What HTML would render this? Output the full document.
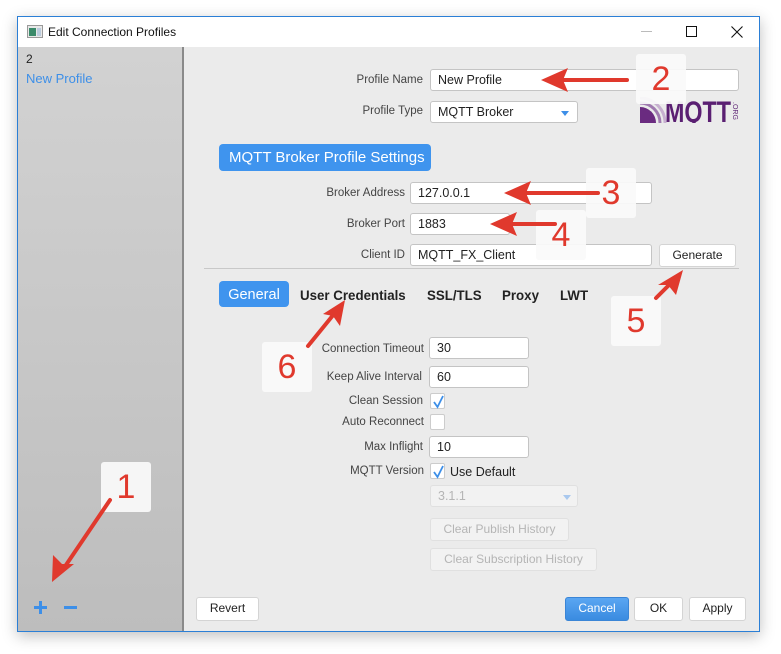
<!DOCTYPE html>
<html><head><meta charset="utf-8"><style>
*{box-sizing:border-box;margin:0;padding:0}
body{width:781px;height:654px;background:#fff;position:relative;overflow:hidden;font-family:"Liberation Sans",sans-serif;}
.win{position:absolute;left:17px;top:16px;width:743px;height:616px;border:1px solid #2b7fd6;background:#ebebeb;box-shadow:0 4px 14px rgba(0,0,0,.25)}
.title{position:absolute;left:0;top:0;width:741px;height:30px;background:#fff}
.side{position:absolute;left:0;top:30px;width:166px;height:584px;background:linear-gradient(#d2d2d2,#bdbdbd);border-right:2px solid #8a8a8a}
.a{position:absolute;}
.lbl{position:absolute;font-size:11.5px;color:#444;text-align:right;white-space:nowrap}
.inp{position:absolute;background:#fff;border:1px solid #c4c4c4;border-radius:3px;font-size:12.5px;color:#222;padding-left:7px;line-height:20px}
.btn{position:absolute;background:#fff;border:1px solid #d4d4d4;border-radius:3px;font-size:12px;color:#222;text-align:center;line-height:21px}
.dis{background:#f2f2f2;color:#b5b5b5;border-color:#e0e0e0}
.tab{position:absolute;top:281px;font-size:14px;color:#222;font-weight:bold;line-height:28px;transform-origin:left center;transform:scaleX(.95);white-space:nowrap}
.cb{position:absolute;width:15px;height:16px;background:#fff;border:1px solid #ccc;border-radius:2px}
.cb svg{position:absolute;left:1px;top:1px}
.box{position:absolute;width:50px;height:50px;background:rgba(250,250,250,.93);border-radius:3px;font-size:34px;color:#e0392d;text-align:center;line-height:50px}
</style></head><body>
<div class="win">
 <div class="title">
  <svg class="a" style="left:9px;top:8px" width="16" height="13"><rect x="0.5" y="0.5" width="15" height="12" fill="#e8e8e8" stroke="#999"/><rect x="2" y="3" width="7" height="8" fill="#3a8a6a"/><rect x="10" y="3" width="4" height="8" fill="#bcd"/></svg>
  <div class="a" style="left:30px;top:8px;font-size:12px;color:#111">Edit Connection Profiles</div>
  <div class="a" style="left:623px;top:14px;width:11px;height:1px;background:#bbb"></div>
  <div class="a" style="left:668px;top:9px;width:11px;height:11px;border:1px solid #111"></div>
  <svg class="a" style="left:713px;top:9px" width="12" height="12"><path d="M0.5 0.5L11.5 11.5M11.5 0.5L0.5 11.5" stroke="#111" stroke-width="1.1"/></svg>
 </div>
 <div class="side">
  <div class="a" style="left:8px;top:5px;font-size:12px;color:#222">2</div>
  <div class="a" style="left:8px;top:24px;font-size:13px;color:#3d8fe8">New Profile</div>
  <div class="a" style="left:16px;top:559px;width:13px;height:3px;background:#3d8fe8"></div>
  <div class="a" style="left:21px;top:554px;width:3px;height:13px;background:#3d8fe8"></div>
  <div class="a" style="left:46px;top:559px;width:13px;height:3px;background:#3d8fe8"></div>
 </div>
</div>
<div class="lbl" style="right:358px;top:74px">Profile Name</div>
<div class="inp" style="left:430px;top:69px;width:309px;height:22px">New Profile</div>
<div class="lbl" style="right:358px;top:105px">Profile Type</div>
<div class="inp" style="left:430px;top:101px;width:148px;height:22px">MQTT Broker<span style="position:absolute;right:8px;top:9px;border:4px solid transparent;border-top:5px solid #3d8fe8;border-bottom:0"></span></div>
<svg class="a" style="left:640px;top:97px" width="100" height="26"><path d="M0 26 V10 A16 16 0 0 1 16 26Z" fill="#6a2b80"/><path d="M0 6 A20 20 0 0 1 20 26" stroke="#a07ab0" stroke-width="3" fill="none"/><path d="M0 1 A25 25 0 0 1 25 26" stroke="#c7b0d0" stroke-width="3" fill="none"/><text x="25" y="25" font-family="Liberation Sans" font-weight="bold" font-size="30" fill="#5a1f72" textLength="66" lengthAdjust="spacingAndGlyphs">MQTT</text><text x="93" y="5" font-size="7" fill="#5a1f72" transform="rotate(90 93 5)">.ORG</text></svg>
<div class="a" style="left:219px;top:144px;width:212px;height:27px;background:#3f94ee;border-radius:4px;color:#fff;font-size:15px;line-height:27px;padding-left:10px">MQTT Broker Profile Settings</div>
<div class="lbl" style="right:376px;top:187px">Broker Address</div>
<div class="inp" style="left:410px;top:182px;width:242px;height:22px">127.0.0.1</div>
<div class="lbl" style="right:376px;top:218px">Broker Port</div>
<div class="inp" style="left:410px;top:213px;width:100px;height:22px">1883</div>
<div class="lbl" style="right:376px;top:249px">Client ID</div>
<div class="inp" style="left:410px;top:244px;width:242px;height:22px">MQTT_FX_Client</div>
<div class="btn" style="left:659px;top:244px;width:77px;height:23px">Generate</div>
<div class="a" style="left:204px;top:268px;width:535px;height:1px;background:#c8c8c8"></div>
<div class="a" style="left:219px;top:281px;width:70px;height:26px;background:#3f94ee;border-radius:4px;color:#fff;font-size:14.5px;line-height:28px;text-align:center">General</div>
<div class="tab" style="left:300px">User Credentials</div>
<div class="tab" style="left:427px">SSL/TLS</div>
<div class="tab" style="left:502px">Proxy</div>
<div class="tab" style="left:560px">LWT</div>
<div class="lbl" style="right:357px;top:343px">Connection Timeout</div>
<div class="inp" style="left:429px;top:337px;width:100px;height:22px">30</div>
<div class="lbl" style="right:359px;top:371px">Keep Alive Interval</div>
<div class="inp" style="left:429px;top:366px;width:100px;height:22px">60</div>
<div class="lbl" style="right:358px;top:395px">Clean Session</div>
<div class="cb" style="left:430px;top:393px"><svg width="13" height="14"><path d="M2 7L5.5 12L11 1" stroke="#3d8fe8" stroke-width="1.8" fill="none"/></svg></div>
<div class="lbl" style="right:357px;top:416px">Auto Reconnect</div>
<div class="cb" style="left:430px;top:414px"></div>
<div class="lbl" style="right:358px;top:441px">Max Inflight</div>
<div class="inp" style="left:429px;top:436px;width:100px;height:22px">10</div>
<div class="lbl" style="right:357px;top:465px">MQTT Version</div>
<div class="cb" style="left:430px;top:463px"><svg width="13" height="14"><path d="M2 7L5.5 12L11 1" stroke="#3d8fe8" stroke-width="1.8" fill="none"/></svg></div>
<div class="a" style="left:450px;top:465px;font-size:12.5px;color:#222">Use Default</div>
<div class="inp dis" style="left:430px;top:485px;width:148px;height:22px">3.1.1<span style="position:absolute;right:6px;top:9px;border:4px solid transparent;border-top:5px solid #a9c8ee;border-bottom:0"></span></div>
<div class="btn dis" style="left:430px;top:518px;width:139px;height:23px">Clear Publish History</div>
<div class="btn dis" style="left:430px;top:548px;width:167px;height:23px">Clear Subscription History</div>
<div class="btn" style="left:196px;top:597px;width:63px;height:24px">Revert</div>
<div class="btn" style="left:565px;top:597px;width:64px;height:24px;background:linear-gradient(#5aa6f2,#3a8be0);border-color:#3a85d6;color:#fff">Cancel</div>
<div class="btn" style="left:634px;top:597px;width:49px;height:24px">OK</div>
<div class="btn" style="left:689px;top:597px;width:57px;height:24px">Apply</div>
<div class="box" style="left:636px;top:54px">2</div>
<div class="box" style="left:586px;top:168px">3</div>
<div class="box" style="left:536px;top:210px">4</div>
<div class="box" style="left:611px;top:296px">5</div>
<div class="box" style="left:262px;top:342px">6</div>
<div class="box" style="left:101px;top:462px">1</div>
<svg class="a" style="left:0;top:0" width="781" height="654">
<g stroke="#e0392d" stroke-width="4" stroke-linecap="round" fill="none">
<path d="M627 80H560"/><path d="M598 193H522"/><path d="M555 224H505"/><path d="M656 298L672 282"/><path d="M308 346L334 314"/><path d="M110 500L66 565"/>
</g>
<g fill="#e0392d">
<path d="M541 80L568 68L563 80L568 92Z"/>
<path d="M504 193L531 181L526 193L531 205Z"/>
<path d="M490 224L517 212L512 224L517 236Z"/>
<path d="M683 270L676 295L668 285L658 285Z"/>
<path d="M345 300L340 326L333 316L323 314Z"/>
<path d="M52 582L53 555L62 564L74 564Z"/>
</g>
</svg>
</body></html>
